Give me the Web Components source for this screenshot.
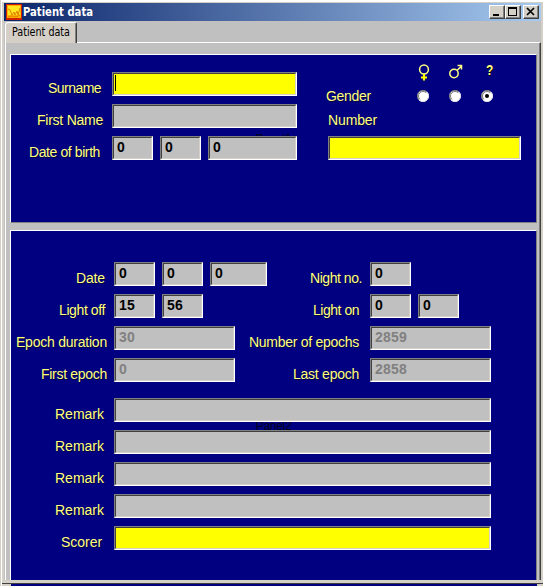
<!DOCTYPE html>
<html lang="en"><head><meta charset="utf-8"><title>Patient data</title>
<style>html,body{margin:0;width:543px;height:586px;overflow:hidden;background:#d4d0c8}</style></head>
<body><patient-window></patient-window>
<script>
class Base extends HTMLElement{
  constructor(){super();this.attachShadow({mode:'open'}).innerHTML=this.view();}
  view(){return '';}
}
/* Text label fitted to a given width; "gap" is the space after it. */
customElements.define('form-label',class extends Base{
  view(){return `<style>:host{display:block;justify-self:end;height:24px;font:14px/16px "Liberation Sans",Arial,sans-serif;color:#ffff80;white-space:nowrap;text-shadow:1px 1px 0 rgba(0,0,0,.55)}
  span{display:inline-block;margin-top:8px}</style><span><slot></slot></span>`;}
  connectedCallback(){
    const s=this.shadowRoot.querySelector('span'),w=+this.getAttribute('w');
    this.style.marginRight=(this.getAttribute('gap')||0)+'px';
    const n=this.textContent.length,nat=s.getBoundingClientRect().width;
    if(w&&nat)s.style.letterSpacing=((w-nat)/n)+'px';
  }
});
customElements.define('edit-field',class extends Base{
  view(){return `<style>:host{display:block;box-sizing:border-box;width:41px;height:24px;flex:none;border:1px solid;border-color:#808080 #fff #fff #808080;font:bold 14px/16px "Liberation Sans",Arial,sans-serif;color:#000}
  div{box-sizing:border-box;height:22px;padding:1px 0 0 3px;border:1px solid;border-color:#404040 #d4d0c8 #d4d0c8 #404040;background:#c0c0c0;letter-spacing:.2px}
  :host([required]) div{background:#ff0}
  :host([disabled]){color:#808080}
  :host([focused]) div::before{content:"";display:block;width:1px;height:16px;margin-left:-2px;background:#000}
  :host([focused]) div{padding-left:3px}</style><div><slot></slot></div>`;}
  connectedCallback(){if(this.hasAttribute('w'))this.style.width=this.getAttribute('w')+'px';}
});
customElements.define('field-group',class extends Base{
  view(){return `<style>:host{display:flex;gap:7px;height:24px}</style><slot></slot>`;}
});
customElements.define('radio-dot',class extends Base{
  view(){return `<style>:host{display:block;width:12px;height:12px}svg{display:block}.d{display:none}:host([checked]) .d{display:block}</style>
  <svg width="12" height="12" viewBox="0 0 12 12"><circle cx="6" cy="6" r="5.5" fill="#fff"/><path d="M2 10A5.5 5.5 0 0 1 10 2" fill="none" stroke="#808080"/><path d="M2.8 9.2A4.5 4.5 0 0 1 9.2 2.8" fill="none" stroke="#404040" stroke-width=".7"/><path d="M10 2A5.5 5.5 0 0 1 2 10" fill="none" stroke="#e8e8e8"/><circle class="d" cx="6" cy="6" r="2" fill="#000"/></svg>`;}
});
customElements.define('gender-choice',class extends Base{
  view(){return `<style>:host{display:grid;grid-template-columns:repeat(3,12px);column-gap:20px;grid-template-rows:26px 12px;color:#ffff80}
  svg{display:block;overflow:visible}.q{font:bold 14px/16px "Liberation Sans",Arial,sans-serif;margin:-2px 0 0 5px;text-shadow:1px 1px #000;transform:scaleX(.85);transform-origin:left}</style>
  <svg width="12" height="18" fill="none" stroke="#ffff80" stroke-width="1.5"><circle cx="7" cy="5.5" r="4.4"/><path d="M7 10v6.5M4 13.5h6" stroke="#ff0" stroke-width="2"/></svg>
  <svg width="12" height="18" fill="none" stroke="#ffff80" stroke-width="1.5"><circle cx="5" cy="9.5" r="4.2"/><path d="M8 6.5L12.5 2M8.5 1.5h4V5.5" /></svg>
  <span class="q">?</span><radio-dot></radio-dot><radio-dot></radio-dot><radio-dot checked></radio-dot>`;}
});
customElements.define('navy-panel',class extends Base{
  view(){return `<style>:host{display:block;position:relative;box-sizing:border-box;background:#000080;border:1px solid;border-color:#fff #808080 #808080 #fff;width:527px}
  .cap{position:absolute;left:0;right:0;top:calc(50% - 8px);text-align:center;font:12px/16px "Liberation Sans",Arial,sans-serif;color:#000020;letter-spacing:-.3px}
  .body{position:relative}</style><div class="cap"></div><div class="body"><slot></slot></div>`;}
  connectedCallback(){this.shadowRoot.querySelector('.cap').textContent=this.getAttribute('caption');}
});
customElements.define('title-bar',class extends Base{
  view(){return `<style>:host{display:flex;align-items:center;height:18px;box-sizing:border-box;padding:0 2px 0 2px;background:linear-gradient(90deg,#0a246a,#a6caf0);font:bold 12px/16px "DejaVu Sans Condensed","DejaVu Sans",Verdana,sans-serif;color:#fff}
  .t{flex:1;margin-left:1px;display:block}.t b{display:inline-block;transform-origin:left}
  .b{box-sizing:border-box;width:16px;height:14px;background:#d4d0c8;border:1px solid;border-color:#fff #404040 #404040 #fff;box-shadow:inset -1px -1px #808080}
  .x{margin-left:2px}svg{display:block}</style>
  <svg width="16" height="16"><path fill="#d02000" d="M0 0h16v16H0z"/><path fill="#ffb000" d="M1 1h14v13H1z"/><path fill="#ffe820" d="M2 2h12v9H2z"/><path d="M2 5l2 1 2 5 2-3 1 3 2-4 1 4 2-7M2 13l4-1 4 1 4-2" fill="none" stroke="#e08000"/></svg>
  <span class="t"><b>Patient data</b></span>
  <span class="b"><svg width="14" height="12"><path d="M3 8h6v2H3z"/></svg></span>
  <span class="b"><svg width="14" height="12"><path d="M2 1h9v9H2zM3 3v6h7V3z" fill-rule="evenodd"/></svg></span>
  <span class="b x"><svg width="14" height="12"><path d="M3 2l7 7M10 2l-7 7" stroke="#000" stroke-width="1.7"/></svg></span>`;}
  connectedCallback(){const b=this.shadowRoot.querySelector('b');b.style.transform='scaleX('+(70/b.getBoundingClientRect().width)+')';}
});
customElements.define('tab-head',class extends Base{
  view(){return `<style>:host{display:block;box-sizing:border-box;width:72px;height:21px;background:#d4d0c8;border:1px solid;border-color:#fff #404040 transparent #fff;border-bottom:0;border-radius:3px 2px 0 0;box-shadow:inset -1px 0 #808080;font:12px/14px "DejaVu Sans Condensed","DejaVu Sans",Tahoma,sans-serif;padding:2px 0 0 6px;color:#000;white-space:nowrap}span{display:inline-block;transform-origin:left}</style><span><slot></slot></span>`;}
  connectedCallback(){const s=this.shadowRoot.querySelector('span');s.style.transform='scaleX('+(58/s.getBoundingClientRect().width)+')';}
});
customElements.define('patient-window',class extends Base{
  view(){return `<style>
  :host{display:grid;grid-template-rows:3px 18px 559px 3px 1px 2px;width:543px;height:586px;overflow:hidden;background:#d4d0c8;box-shadow:inset 1px 0 #d4d0c8,inset 2px 0 #fff,inset 0 2px #fff}
  title-bar{grid-row:2;margin:0 2px 0 4px}
  main{grid-row:3;margin:0 2px 0 4px;background:#c0c0c0;padding-top:1px;box-sizing:border-box;overflow:hidden}
  tab-head{margin-left:1px}
  .page{box-sizing:border-box;margin:-1px 0 0 1px;width:536px;height:540px;border:solid;border-width:1px 1px 0;border-color:#fff #404040 #fff #fff;box-shadow:inset -1px 0 #808080;padding:11px 0 0 4px}
  tab-head{position:relative}
  .one{height:169px}.two{height:392px;margin-top:7px}
  .cols{display:flex;padding:17px 0 0}
  .left{display:grid;grid-template-columns:101px auto;grid-auto-rows:24px;row-gap:8px}
  .right{margin-left:30px;width:200px}
  .gen{display:flex;justify-content:space-between;padding-right:34px;height:32px;margin:-8px 0 0 -1px}
  .gen form-label{margin-top:16px}
  .num{display:grid;grid-template-rows:24px 24px;row-gap:8px;padding:8px 0 0 1px}
  .num form-label{justify-self:start}
  .grid{display:grid;grid-template-columns:103px 153px 103px auto;grid-auto-rows:24px;row-gap:8px;padding-top:31px;justify-content:start}
  .notes{display:grid;grid-template-columns:103px auto;grid-auto-rows:24px;row-gap:8px;padding-top:16px;justify-content:start}
  .e1{grid-row:5;background:#404040;margin-left:2px}
  .e2{grid-row:6;background:#000080;margin:0 6px 0 11px}
  </style>
  <title-bar></title-bar>
  <main><tab-head>Patient data</tab-head><div class="page">
   <navy-panel class="one" caption="Panel1"><div class="cols"><div class="left">
     <form-label w="53" gap="11">Surname</form-label><edit-field w="185" required focused></edit-field>
     <form-label w="66" gap="9">First Name</form-label><edit-field w="185"></edit-field>
     <form-label w="71" gap="12">Date of birth</form-label><field-group><edit-field>0</edit-field><edit-field>0</edit-field><edit-field w="89">0</edit-field></field-group>
    </div><div class="right"><div class="gen"><form-label w="45">Gender</form-label><gender-choice></gender-choice></div>
     <div class="num"><form-label w="49">Number</form-label><edit-field w="193" required></edit-field></div></div></div>
   </navy-panel>
   <navy-panel class="two" caption="Panel2"><div class="grid">
     <form-label w="29" gap="9">Date</form-label><field-group><edit-field>0</edit-field><edit-field>0</edit-field><edit-field w="57">0</edit-field></field-group>
     <form-label w="52" gap="8">Night no.</form-label><edit-field>0</edit-field>
     <form-label w="46" gap="9">Light off</form-label><field-group><edit-field>15</edit-field><edit-field>56</edit-field></field-group>
     <form-label w="46" gap="11">Light on</form-label><field-group><edit-field>0</edit-field><edit-field>0</edit-field></field-group>
     <form-label w="91" gap="7">Epoch duration</form-label><edit-field w="121" disabled>30</edit-field>
     <form-label w="110" gap="11">Number of epochs</form-label><edit-field w="121" disabled>2859</edit-field>
     <form-label w="66" gap="7">First epoch</form-label><edit-field w="121" disabled>0</edit-field>
     <form-label w="66" gap="11">Last epoch</form-label><edit-field w="121" disabled>2858</edit-field>
    </div><div class="notes">
     <form-label w="49" gap="10">Remark</form-label><edit-field w="377"></edit-field>
     <form-label w="49" gap="10">Remark</form-label><edit-field w="377"></edit-field>
     <form-label w="49" gap="10">Remark</form-label><edit-field w="377"></edit-field>
     <form-label w="49" gap="10">Remark</form-label><edit-field w="377"></edit-field>
     <form-label w="41" gap="12">Scorer</form-label><edit-field w="377" required></edit-field>
    </div></navy-panel>
  </div></main><div class="e1"></div><div class="e2"></div>`;}
});
</script></body></html>
